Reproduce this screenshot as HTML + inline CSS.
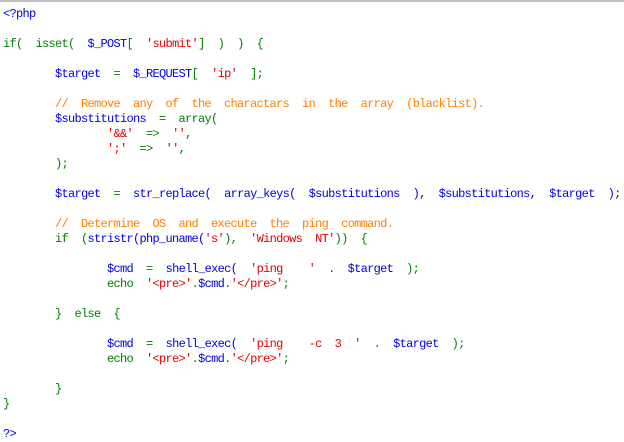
<!DOCTYPE html>
<html><head><meta charset="utf-8"><style>
html,body{margin:0;padding:0;background:#fff;width:624px;height:442px;overflow:hidden}
.bar{position:absolute;left:0;top:0;width:624px;height:2px;background:#c0c0c0}
pre{position:absolute;left:3px;top:7px;margin:0;font-family:"Liberation Mono",monospace;font-size:12px;letter-spacing:-0.7px;line-height:15px;color:#008000}
.b{color:#0000e0}.g{color:#008000}.r{color:#e00000}.o{color:#ff8000}
</style></head><body><div class="bar"></div><pre><span class="b">&lt;?php</span>

if(  isset(  <span class="b">$_POST</span>[  <span class="r">'submit'</span>]  )  )  {

        <span class="b">$target</span>  =  <span class="b">$_REQUEST</span>[  <span class="r">'ip'</span>  ];

        <span class="o">//  Remove  any  of  the  charactars  in  the  array  (blacklist).</span>
        <span class="b">$substitutions</span>  =  array(
                <span class="r">'&amp;&amp;'</span>  =&gt;  <span class="r">''</span>,
                <span class="r">';'</span>  =&gt;  <span class="r">''</span>,
        );

        <span class="b">$target</span>  =  <span class="b">str_replace(  array_keys(  $substitutions  ),  $substitutions,  $target  );</span>

        <span class="o">//  Determine  OS  and  execute  the  ping  command.</span>
        if  (<span class="b">stristr(php_uname(</span><span class="r">'s'</span>),  <span class="r">'Windows  NT'</span>))  {

                <span class="b">$cmd</span>  =  <span class="b">shell_exec(</span>  <span class="r">'ping    '</span>  .  <span class="b">$target</span>  );
                echo  <span class="r">'&lt;pre&gt;'</span>.<span class="b">$cmd</span>.<span class="r">'&lt;/pre&gt;'</span>;

        }  else  {

                <span class="b">$cmd</span>  =  <span class="b">shell_exec(</span>  <span class="r">'ping    -c  3  '</span>  .  <span class="b">$target</span>  );
                echo  <span class="r">'&lt;pre&gt;'</span>.<span class="b">$cmd</span>.<span class="r">'&lt;/pre&gt;'</span>;

        }
}

<span class="b">?&gt;</span></pre></body></html>
